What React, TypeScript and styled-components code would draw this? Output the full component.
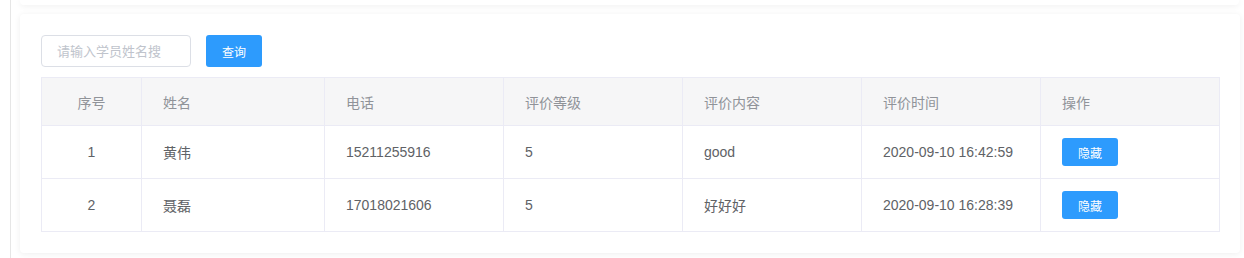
import React from "react";
import styled, { createGlobalStyle } from "styled-components";

const Global = createGlobalStyle`
  html, body { margin: 0; padding: 0; background: #fff; }
  body {
    font-family: "Helvetica Neue", "Liberation Sans", "Noto Sans CJK SC", sans-serif;
    -webkit-font-smoothing: antialiased;
  }
`;

const Page = styled.div`
  display: flex;
  height: 258px;
  overflow: hidden;
`;

const Rail = styled.div`
  width: 10px;
  flex: none;
  border-right: 1px solid #e6e6e6;
`;

const Content = styled.div`
  flex: 1;
  padding: 0 4px 0 9px;
  display: flex;
  flex-direction: column;
  gap: 9px;
`;

const CardStub = styled.div`
  height: 5px;
  background: #fff;
  border-radius: 0 0 4px 4px;
  box-shadow: 0 1px 6px rgba(0, 0, 0, 0.07);
  margin-right: 1px;
`;

const Card = styled.div`
  background: #fff;
  border-radius: 4px;
  box-shadow: 0 1px 6px rgba(0, 0, 0, 0.07);
  padding: 21px 20px 21px 21px;
  display: flex;
  flex-direction: column;
  gap: 10px;
`;

const Toolbar = styled.div`
  display: flex;
  align-items: center;
  gap: 15px;
`;

const SearchInput = styled.input`
  box-sizing: border-box;
  width: 150px;
  height: 32px;
  border: 1px solid #dcdfe6;
  border-radius: 4px;
  padding: 0 15px;
  font-size: 13px;
  font-family: inherit;
  color: #606266;
  outline: none;
  &::placeholder { color: #c0c4cc; }
`;

const Button = styled.button<{ $h: number }>`
  width: 56px;
  height: ${(p) => p.$h}px;
  border: none;
  border-radius: 3px;
  background: #2d9bfd;
  color: #fff;
  font-size: 12px;
  font-family: inherit;
  padding: 0;
  cursor: pointer;
`;

const Table = styled.table`
  border-collapse: collapse;
  width: 1178px;
  table-layout: fixed;
  font-size: 14px;
`;

const Th = styled.th<{ $center?: boolean }>`
  height: 47px;
  background: #f6f6f7;
  color: #909399;
  font-weight: 400;
  text-align: ${(p) => (p.$center ? "center" : "left")};
  padding: 0 21px;
  border: 1px solid #ebebf5;
`;

const Td = styled.td<{ $center?: boolean }>`
  height: 52px;
  color: #606266;
  text-align: ${(p) => (p.$center ? "center" : "left")};
  padding: 0 21px;
  border: 1px solid #ebebf5;
`;

const cols = [100, 183, 179, 179, 179, 179, 179];
const headers = ["序号", "姓名", "电话", "评价等级", "评价内容", "评价时间", "操作"];
const rows = [
  { id: 1, name: "黄伟", phone: "15211255916", level: "5", content: "good", time: "2020-09-10 16:42:59" },
  { id: 2, name: "聂磊", phone: "17018021606", level: "5", content: "好好好", time: "2020-09-10 16:28:39" },
];

export default function App() {
  return (
    <>
      <Global />
      <Page>
        <Rail />
        <Content>
          <CardStub />
          <Card>
            <Toolbar>
              <SearchInput placeholder="请输入学员姓名搜" />
              <Button $h={32}>查询</Button>
            </Toolbar>
            <Table>
              <colgroup>
                {cols.map((w, i) => (
                  <col key={i} style={{ width: w }} />
                ))}
              </colgroup>
              <thead>
                <tr>
                  {headers.map((h, i) => (
                    <Th key={h} $center={i === 0}>{h}</Th>
                  ))}
                </tr>
              </thead>
              <tbody>
                {rows.map((r) => (
                  <tr key={r.id}>
                    <Td $center>{r.id}</Td>
                    <Td>{r.name}</Td>
                    <Td>{r.phone}</Td>
                    <Td>{r.level}</Td>
                    <Td>{r.content}</Td>
                    <Td>{r.time}</Td>
                    <Td>
                      <Button $h={28}>隐藏</Button>
                    </Td>
                  </tr>
                ))}
              </tbody>
            </Table>
          </Card>
        </Content>
      </Page>
    </>
  );
}
